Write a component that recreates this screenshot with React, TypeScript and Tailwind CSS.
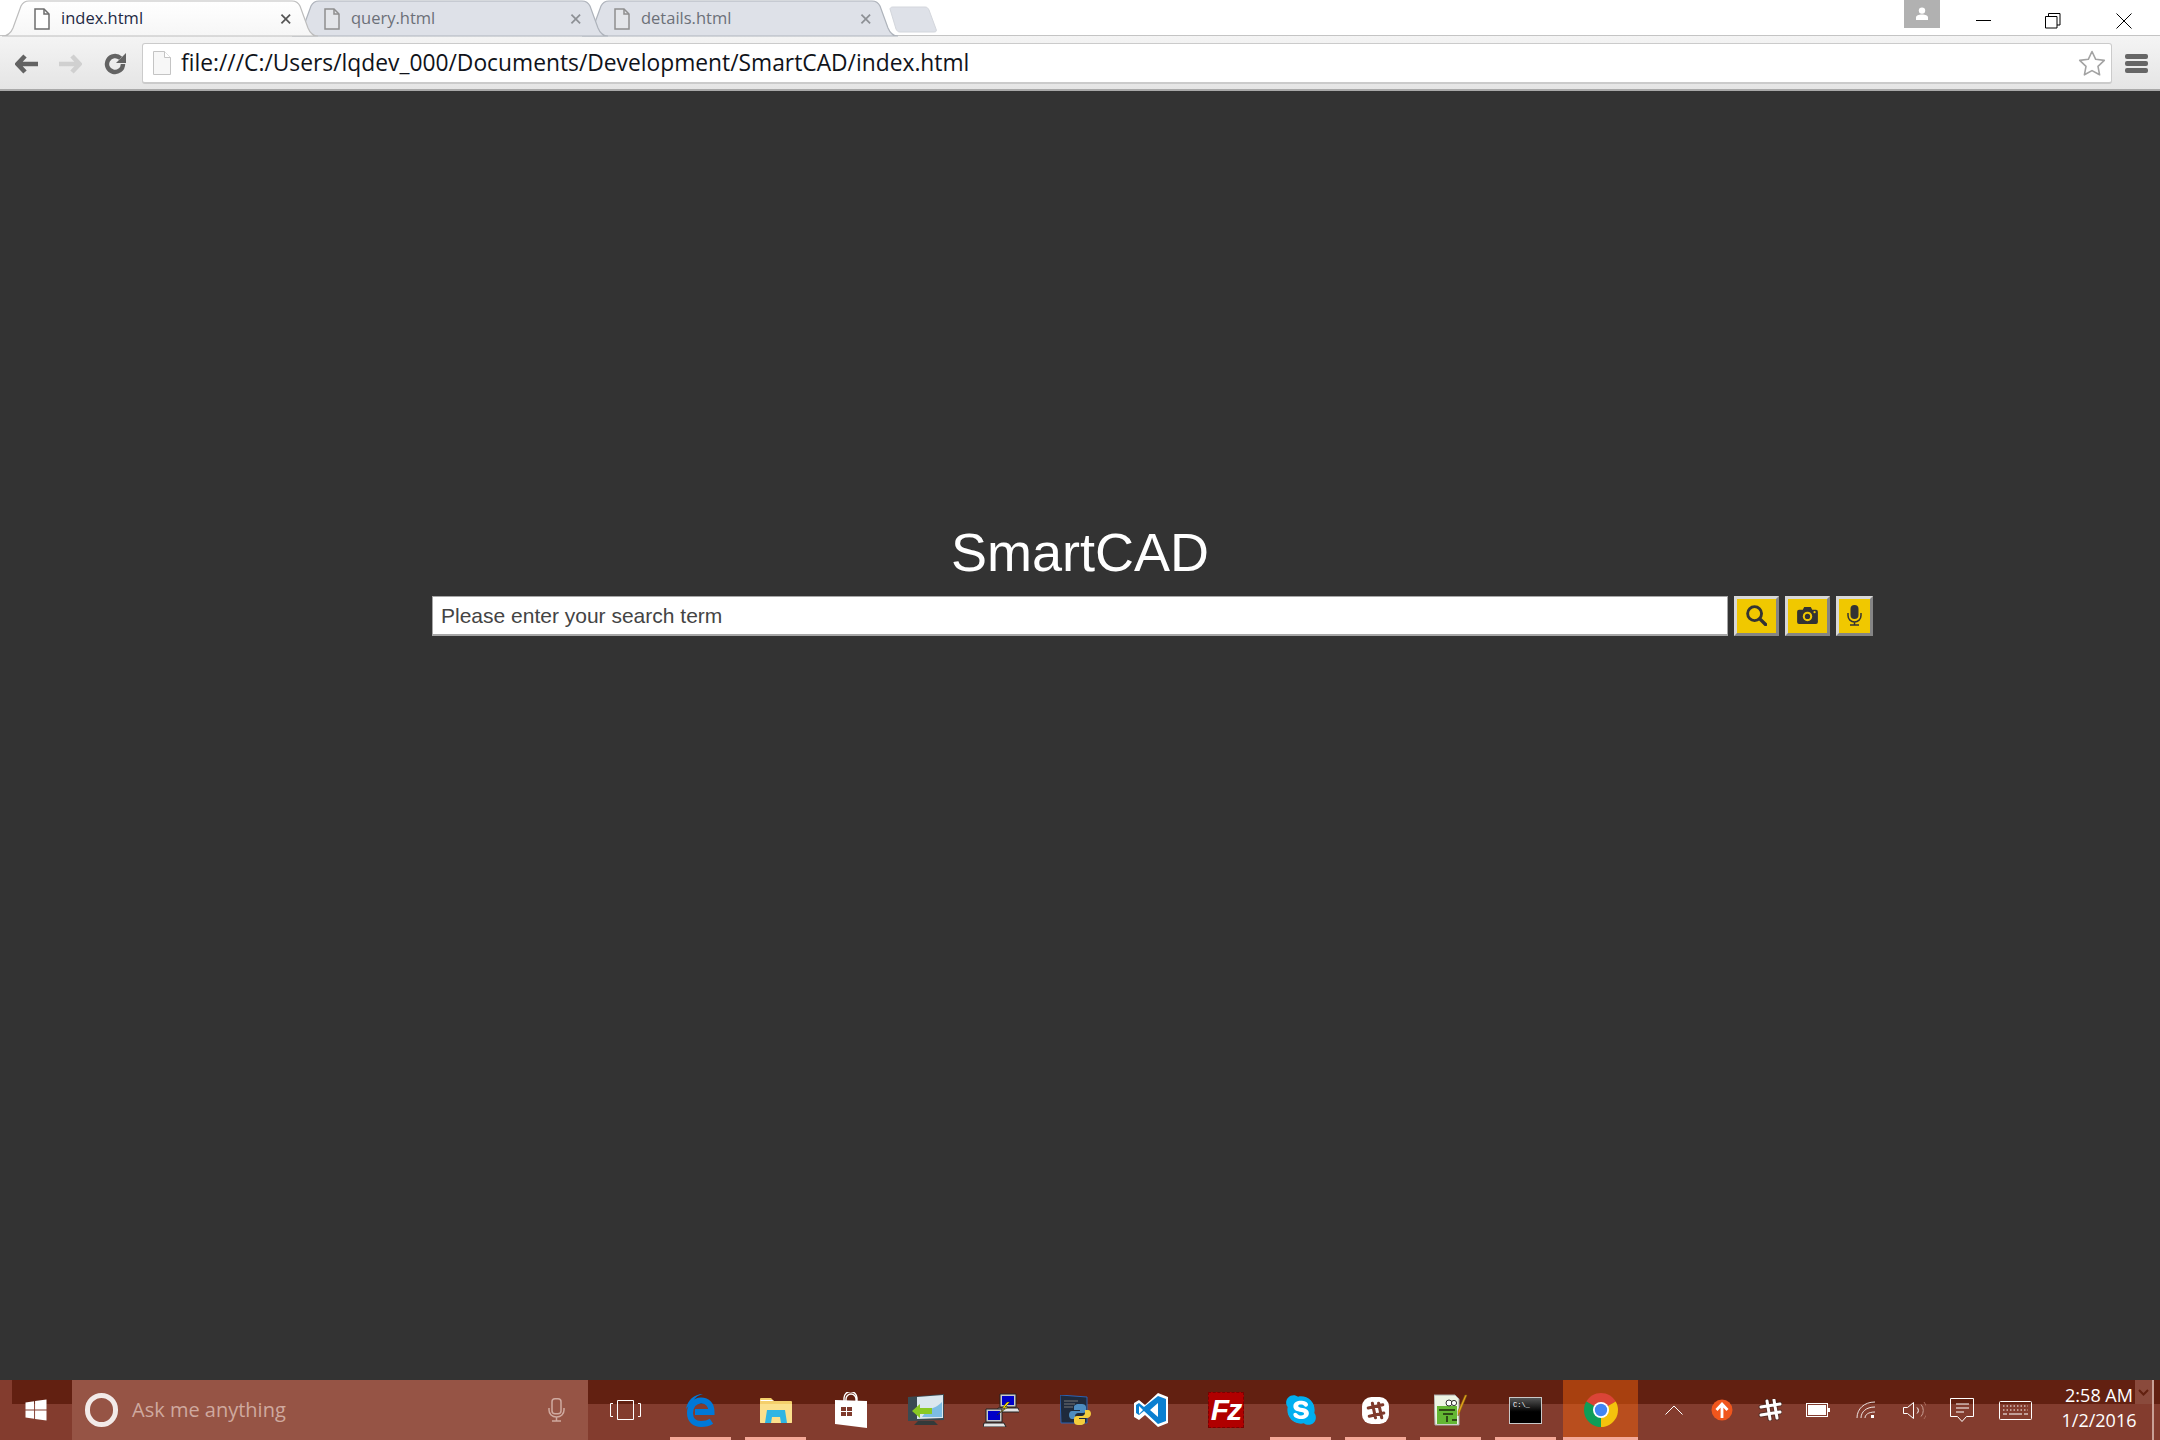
import React from "react";
import { FaSkype, FaWindows } from "react-icons/fa";

const uiFont = "font-['Open_Sans',sans-serif]";

const PageIcon = ({ muted = false }: { muted?: boolean }) => (
  <svg width="16" height="22" viewBox="0 0 16 22" className="shrink-0">
    <path
      d="M1 1h9l5 5v15H1z"
      fill={muted ? "#e4e6ea" : "#fff"}
      stroke={muted ? "#8f8f8f" : "#6d6d6d"}
      strokeWidth="1.5"
    />
    <path d="M10 1v5h5" fill="none" stroke={muted ? "#8f8f8f" : "#6d6d6d"} strokeWidth="1.5" />
  </svg>
);

const TabShape = ({ active }: { active: boolean }) => (
  <svg width="316" height="37" viewBox="0 0 316 37" className="absolute left-0 top-0">
    <defs>
      <linearGradient id="activeTab" x1="0" y1="0" x2="0" y2="1">
        <stop offset="0" stopColor="#ffffff" />
        <stop offset="1" stopColor="#f6f6f6" />
      </linearGradient>
    </defs>
    <path
      d="M0 36C6 36 9 33 11 28L19 6C21 2 23 1 27 1L290 1C294 1 296 2 298 6L306 28C308 33 311 36 316 36Z"
      fill={active ? "url(#activeTab)" : "#dee1e8"}
      stroke={active ? "#bdbdbd" : "#aeb3bb"}
      strokeWidth="1.2"
    />
  </svg>
);

const Tab = ({ title, active = false, z }: { title: string; active?: boolean; z: string }) => (
  <div className={`relative h-[37px] w-[290px] shrink-0 ${z}`}>
    <TabShape active={active} />
    <div className="relative flex h-[37px] items-center pl-[32px]">
      <PageIcon muted={!active} />
      <span className={`ml-[11px] w-[228px] text-[16.5px] ${active ? "text-[#1f2a44]" : "text-[#6c7078]"}`}>
        {title}
      </span>
      <svg width="12" height="12" viewBox="0 0 12 12">
        <path
          d="M1.5 1.5l9 9M10.5 1.5l-9 9"
          stroke={active ? "#555" : "#8d9095"}
          strokeWidth="1.8"
          fill="none"
        />
      </svg>
    </div>
  </div>
);

const TabStrip = () => (
  <div className={`relative flex h-[36px] bg-white pl-[2px] ${uiFont}`}>
    <div className="absolute bottom-0 left-0 h-px w-full bg-[#c4c4c4]" />
    <Tab title="index.html" active z="z-30" />
    <Tab title="query.html" z="z-20" />
    <Tab title="details.html" z="z-10" />
    <svg width="50" height="28" viewBox="0 0 50 28" className="relative z-0 ml-[17px] mt-[6px] shrink-0">
      <path
        d="M1 3C1 2 2 1 4 1H36C38 1 39 2 40 4L47 23C48 25 47 26 45 26H11C9 26 8 25 7 23Z"
        fill="#dee1e8"
        stroke="#d3d6dc"
      />
    </svg>
    <div className="relative z-0 ml-auto flex h-[36px] items-start">
      <div className="flex h-[28px] w-[36px] items-center justify-center bg-[#b1b1b1]">
        <svg width="14" height="14" viewBox="0 0 14 14">
          <circle cx="7" cy="3.6" r="3.2" fill="#fff" />
          <path d="M1 13v-2.5C1 8.8 3.5 7.6 7 7.6s6 1.2 6 2.9V13z" fill="#fff" />
        </svg>
      </div>
      <div className="flex h-[28px] w-[86px] items-end justify-center pb-[7px]">
        <div className="h-px w-[15px] bg-black" />
      </div>
      <svg width="16" height="16" viewBox="0 0 16 16" className="ml-[19px] mt-[13px]">
        <path d="M.5 3.5h11.5v11.5H.5zM3.5 3.5V.5h11.5v11.5H12" fill="none" stroke="#000" />
      </svg>
      <svg width="16" height="16" viewBox="0 0 16 16" className="ml-[55px] mr-[28px] mt-[13px]">
        <path d="M.5.5l15 15M15.5.5l-15 15" fill="none" stroke="#000" />
      </svg>
    </div>
  </div>
);

const NavArrow = ({ dir, color }: { dir: "left" | "right"; color: string }) => (
  <svg width="24" height="20" viewBox="0 0 24 20" className={dir === "right" ? "-scale-x-100" : ""}>
    <path d="M10 2L2.5 10l7.5 8M3 10h20" fill="none" stroke={color} strokeWidth="4.6" />
  </svg>
);

const Toolbar = () => (
  <div className="flex h-[55px] items-center border-b-2 border-[#a9a9a9] bg-[linear-gradient(#f4f4f4,#e5e5e5)] pl-[15px] pt-[2px]">
    <NavArrow dir="left" color="#636363" />
    <div className="ml-[19px]">
      <NavArrow dir="right" color="#d0d0d0" />
    </div>
    <svg width="23" height="23" viewBox="0 0 23 23" className="ml-[22px]">
      <path d="M19 12a8 8 0 1 1-2.4-5.7" fill="none" stroke="#636363" strokeWidth="4.4" />
      <path d="M22 1v10H12z" fill="#636363" />
    </svg>
    <div className="ml-[15px] flex h-[41px] w-[1970px] items-center rounded-[3px] border border-b-2 border-[#cbcbcb] bg-white pl-[10px] pr-[5px]">
      <svg width="18" height="24" viewBox="0 0 18 24" className="shrink-0">
        <path d="M.5.5h11l6 6v17H.5z" fill="#f7f7f7" stroke="#c4c4c4" />
        <path d="M11.5.5v6h6" fill="#fff" stroke="#c4c4c4" />
      </svg>
      <span className={`ml-[10px] text-[22.8px] text-[#10131a] ${uiFont}`}>
        file:///C:/Users/lqdev_000/Documents/Development/SmartCAD/index.html
      </span>
      <svg width="28" height="27" viewBox="0 0 28 27" className="ml-auto">
        <path
          d="M14 1.5l3.7 7.8 8.6 1.1-6.3 5.9 1.6 8.5-7.6-4.2-7.6 4.2 1.6-8.5-6.3-5.9 8.6-1.1z"
          fill="#fff"
          stroke="#a3a3a3"
          strokeWidth="1.6"
          strokeLinejoin="round"
        />
      </svg>
    </div>
    <div className="ml-[13px] flex w-[23px] flex-col gap-[2px]">
      <div className="h-[5px] rounded-[2px] bg-[#666]" />
      <div className="h-[5px] rounded-[2px] bg-[#666]" />
      <div className="h-[5px] rounded-[2px] bg-[#666]" />
    </div>
  </div>
);

const SearchButton = ({ width, children }: { width: string; children: React.ReactNode }) => (
  <button
    className={`flex h-[40px] items-center justify-center border-[3px] border-b-[#858585] border-l-[#d8d8d8] border-r-[#858585] border-t-[#d8d8d8] bg-[#f0c800] pb-[2px] ${width}`}
  >
    {children}
  </button>
);

const Search = () => (
  <div className="flex items-start pl-[432px]">
    <input
      placeholder="Please enter your search term"
      className="h-[40px] w-[1296px] border border-b-2 border-[#a6a6a6] bg-white pl-[8px] font-['Liberation_Sans',sans-serif] text-[21px] text-[#444] outline-none placeholder:text-[#444]"
    />
    <div className="ml-[6px] flex gap-[6px]">
      <SearchButton width="w-[45px]">
        <svg width="21" height="21" viewBox="0 0 22 22">
          <circle cx="9" cy="9" r="7.3" fill="none" stroke="#333" strokeWidth="3" />
          <path d="M14.5 14.5l6 6" stroke="#333" strokeWidth="3.6" strokeLinecap="round" />
        </svg>
      </SearchButton>
      <SearchButton width="w-[45px]">
        <svg width="21" height="17" viewBox="0 0 22 18">
          <path
            d="M2 3h4l1.5-3h7L16 3h4a2 2 0 0 1 2 2v11a2 2 0 0 1-2 2H2a2 2 0 0 1-2-2V5a2 2 0 0 1 2-2z"
            fill="#333"
          />
          <circle cx="11" cy="10" r="5" fill="#f0c800" />
          <circle cx="11" cy="10" r="2.8" fill="#333" />
          <circle cx="18.5" cy="5.5" r="1.2" fill="#f0c800" />
        </svg>
      </SearchButton>
      <SearchButton width="w-[37px]">
        <svg width="15" height="21" viewBox="0 0 15 21">
          <rect x="3.5" y="0" width="8" height="14" rx="4" fill="#333" />
          <path d="M1 8v2.5a6.5 6.5 0 0 0 13 0V8M7.5 17v3M3 20h9" fill="none" stroke="#333" strokeWidth="1.5" />
        </svg>
      </SearchButton>
    </div>
  </div>
);

const Main = () => (
  <main className="flex-1 bg-[#333333] pt-[431px]">
    <h1 className="text-center font-['Liberation_Sans',sans-serif] text-[54px] font-normal leading-[60px] text-white">
      SmartCAD
    </h1>
    <div className="mt-[14px]">
      <Search />
    </div>
  </main>
);

const EdgeIcon = () => (
  <svg width="30" height="33" viewBox="0 0 30 33">
    <path
      d="M9 18h16.500c0-7-4-11.500-10.500-11.500C8.500 6.500 4 12 4 19c0 7.500 5 11 11 11 4 0 7.500-.8 10.500-2.800"
      fill="none"
      stroke="#0078d7"
      strokeWidth="6"
    />
    <path d="M0 15C1.500 6.500 8 0 17 0 11 1.500 8 4.500 6.500 9 4 10.500 2 12.500 0 15z" fill="#0078d7" />
  </svg>
);

const SkypeIcon = () => (
  <div className="relative flex h-[34px] w-[34px] items-center justify-center">
    <div className="absolute h-[26px] w-[26px] rounded-full bg-white" />
    <FaSkype size={34} className="relative text-[#00aff0]" />
  </div>
);

const FolderIcon = () => (
  <svg width="32" height="26" viewBox="0 0 32 26">
    <path d="M0 2a1 1 0 0 1 1-1h10l3 3h17a1 1 0 0 1 1 1v20a1 1 0 0 1-1 1H1a1 1 0 0 1-1-1z" fill="#f4cf6b" />
    <path d="M0 4h12l2-1H1z" fill="#fff" />
    <path d="M0 7h32v18a1 1 0 0 1-1 1H1a1 1 0 0 1-1-1z" fill="#fbe08c" />
    <path d="M5 26l2-13h18l2 13h-6l-1-6h-8l-1 6z" fill="#2fb5e3" />
  </svg>
);

const StoreIcon = () => (
  <svg width="32" height="36" viewBox="0 0 32 36">
    <path d="M9 9V6a6 6 0 0 1 13 0v4M11 9V7a5 5 0 0 1 10 0v3" fill="none" stroke="#fff" strokeWidth="1.4" />
    <path d="M0 8l32 1v27L0 32z" fill="#fff" />
    <path d="M6 15h5v4H6zM12 15h5v4h-5zM6 20h5v4H6zM12 20h5v4h-5z" fill="#7f3a2c" />
  </svg>
);

const ScreenArrowIcon = () => (
  <svg width="36" height="32" viewBox="0 0 36 32">
    <path d="M10 27h16l4 4H6z" fill="#333a3a" />
    <path d="M0 3l36-3v26l-36 1z" fill="#3a4a52" />
    <path d="M9 3l26-2v23l-26 1z" fill="#dbe7ee" />
    <path d="M20 15c5 0 10-3 14-7v15H14z" fill="#7cbce4" />
    <path d="M4 17l8-7v4h12v6H12v4z" fill="#8ac924" />
  </svg>
);

const Monitor = ({ x, y }: { x: number; y: number }) => (
  <g transform={`translate(${x} ${y})`}>
    <path d="M2 0h16v13H2z" fill="#c9c9c9" stroke="#222" />
    <path d="M4 2h12v9H4z" fill="#0000c8" />
    <path d="M0 14h20l2 4H-1z" fill="#e4e4e4" stroke="#222" />
  </g>
);

const PuttyIcon = () => (
  <svg width="36" height="34" viewBox="0 0 36 34">
    <Monitor x={15} y={1} />
    <Monitor x={1} y={16} />
    <path d="M24 9l-5 6 3 0-8 7 11-8-3 0 5-5z" fill="#ffe800" stroke="#222" strokeWidth=".6" />
  </svg>
);

const PythonIcon = () => (
  <svg width="32" height="31" viewBox="0 0 32 31">
    <path d="M0 0l27 2v26L1 28z" fill="#1f2a3c" stroke="#2a63b5" />
    <path d="M4 6h14M4 9h11M4 12h9" stroke="#777" />
    <path d="M19 9c-4 0-5 2-5 3v3h6v1h-8c-2 0-3 2-3 4s1 4 3 4h3v-3c0-2 2-3 3-3h5c2 0 3-1 3-3v-3c0-2-2-3-4-3z" fill="#4d8cc0" />
    <path d="M20 30c4 0 5-2 5-3v-3h-6v-1h8c2 0 4-2 4-4s-1-4-3-4h-3v3c0 2-2 3-3 3h-5c-2 0-3 1-3 3v3c0 2 2 3 4 3z" fill="#f4cd3d" />
  </svg>
);

const VsCodeIcon = () => (
  <svg width="34" height="34" viewBox="0 0 34 34">
    <path d="M24 0l10 4v26l-10 4-13-12-6 5-5-3V10l5-3 6 5z" fill="#fff" />
    <path d="M24 3l8 3v22l-8 3-14-13-5 4-3-2V12l3-2 5 4zM24 10l-8 7 8 7zM5 13v8l4-4z" fill="#0a7fd0" fillRule="evenodd" />
  </svg>
);

const FileZillaIcon = () => (
  <div className="flex h-[36px] w-[36px] items-center justify-center border border-dashed border-[#7c0000] bg-[#b00000]">
    <span className="font-['Liberation_Sans',sans-serif] text-[30px] font-bold italic leading-none tracking-[-2px] text-white">
      Fz
    </span>
  </div>
);

const SlackIcon = ({ size }: { size: number }) => (
  <svg width={size} height={size} viewBox="0 0 28 28">
    <rect x="1" y="1" width="26" height="26" rx="9" fill="#fff" />
    <path d="M11 7l3 14M17 7l3 14M7 11.5l14-3M8 19.5l14-3" stroke="#7f3a2c" strokeWidth="3" strokeLinecap="round" />
  </svg>
);

const NotepadIcon = () => (
  <svg width="34" height="32" viewBox="0 0 34 32">
    <path d="M0 1h21l4 4v26H1z" fill="#eef4e4" stroke="#aaa" />
    <path d="M3 12h20v18H3z" fill="#63b733" />
    <circle cx="15" cy="9" r="3" fill="#fff" stroke="#333" />
    <circle cx="20" cy="9" r="2.6" fill="#fff" stroke="#333" />
    <path d="M5 16h16M9 20h10M13 22v6M18 26h5" stroke="#2f4a16" strokeWidth="2" />
    <path d="M33 1l-7 17-2 4 0-5 7-16z" fill="#e3a21a" stroke="#7a5a10" strokeWidth=".5" />
  </svg>
);

const CmdIcon = () => (
  <div className="h-[27px] w-[33px] border border-[#c9c9c9] bg-[linear-gradient(#555_0,#000_55%)] pl-[3px] pt-[3px] font-['Liberation_Mono',monospace] text-[7px] leading-[8px] text-white">
    C:\_
  </div>
);

const ChromeIcon = () => (
  <svg width="34" height="34" viewBox="0 0 34 34">
    <path d="M17 17L2.3 8.5A17 17 0 0 1 31.7 8.5z" fill="#db4437" />
    <path d="M17 17L31.7 8.5A17 17 0 0 1 17 34z" fill="#f4c20d" />
    <path d="M17 17L17 34A17 17 0 0 1 2.3 8.5z" fill="#0f9d58" />
    <circle cx="17" cy="17" r="8" fill="#fff" />
    <circle cx="17" cy="17" r="6.2" fill="#4285f4" />
  </svg>
);

const AppSlot = ({ children, active = false }: { children: React.ReactNode; active?: boolean }) => (
  <div
    className={`flex h-[60px] w-[75px] items-center justify-center ${
      active ? "border-b-[3px] border-[#f5a999] bg-[linear-gradient(#a8400f_24px,#b94e1e_24px)] pt-[3px]" : ""
    }`}
  >
    {children}
  </div>
);

const OpenBar = ({ children }: { children: React.ReactNode }) => (
  <div className="flex h-[60px] w-[75px] flex-col items-center">
    <div className="flex h-[57px] items-center pt-[3px]">{children}</div>
    <div className="h-[3px] w-[61px] bg-[#f5a999]" />
  </div>
);

const TrayIcon = ({ children, width = "w-[48px]" }: { children: React.ReactNode; width?: string }) => (
  <div className={`flex h-[60px] items-center justify-center ${width}`}>{children}</div>
);

const Tray = () => (
  <div className="ml-[12px] flex">
    <TrayIcon>
      <svg width="18" height="10" viewBox="0 0 18 10">
        <path d="M.5 9.5L9 1l8.5 8.5" fill="none" stroke="#fff" />
      </svg>
    </TrayIcon>
    <TrayIcon>
      <svg width="22" height="22" viewBox="0 0 22 22">
        <circle cx="11" cy="11" r="10.5" fill="#f0561d" />
        <path d="M11 19V7M5.5 11L11 5l5.5 6" fill="none" stroke="#fff" strokeWidth="2.8" />
      </svg>
    </TrayIcon>
    <TrayIcon>
      <svg width="24" height="22" viewBox="0 0 24 22">
        <path
          d="M9 2l3 18M16 1l3 18M3 8l19-3M3 16l19-3"
          stroke="#222"
          strokeWidth="5"
          strokeLinecap="round"
          opacity=".45"
        />
        <path d="M9 2l3 18M16 1l3 18M3 8l19-3M3 16l19-3" stroke="#fff" strokeWidth="3" strokeLinecap="round" />
      </svg>
    </TrayIcon>
    <TrayIcon>
      <svg width="24" height="14" viewBox="0 0 24 14">
        <rect x=".5" y=".5" width="21" height="13" fill="none" stroke="#fff" />
        <rect x="2" y="2" width="18" height="10" fill="#fff" />
        <rect x="22" y="5" width="2" height="4" fill="#fff" />
      </svg>
    </TrayIcon>
    <TrayIcon>
      <svg width="20" height="18" viewBox="0 0 20 18">
        <path d="M1 17C1 8 8 1 19 1M5 17c0-6 5-11 14-11M9 17c0-3 3-6 10-6" fill="none" stroke="#fff" opacity=".85" />
        <rect x="15" y="14" width="3" height="3" fill="#fff" />
      </svg>
    </TrayIcon>
    <TrayIcon>
      <svg width="23" height="19" viewBox="0 0 23 19">
        <path d="M.5 6.5h4l6-5v16l-6-5h-4z" fill="none" stroke="#fff" />
        <path d="M14 6.500a4 4 0 0 1 0 6" fill="none" stroke="#fff" />
        <path d="M18 3.500a9 9 0 0 1 0 12" fill="none" stroke="#c9a095" />
        <path d="M21 1a13 13 0 0 1 0 17" fill="none" stroke="#a8695a" />
      </svg>
    </TrayIcon>
    <TrayIcon>
      <svg width="24" height="24" viewBox="0 0 24 24">
        <path d="M.5.5h23v18h-7l-4.500 5-4.500-5h-7z" fill="none" stroke="#fff" />
        <path d="M6 6h13M6 10h13M6 14h8" stroke="#fff" />
      </svg>
    </TrayIcon>
    <TrayIcon width="w-[58px]">
      <svg width="33" height="19" viewBox="0 0 33 19">
        <rect x=".5" y=".5" width="32" height="18" rx="1" fill="none" stroke="#fff" />
        <path d="M4 5h25M4 9h25" stroke="#fff" strokeDasharray="1.500 2" />
        <path d="M4 13h4M10 13h13M25 13h4" stroke="#fff" />
      </svg>
    </TrayIcon>
    <div className={`ml-[5px] flex h-[60px] w-[100px] flex-col items-center pt-[3px] text-[18px] leading-[25px] text-white ${uiFont}`}>
      <span>2:58 AM</span>
      <span>1/2/2016</span>
    </div>
  </div>
);

const Taskbar = () => (
  <footer className="relative flex h-[60px] bg-[linear-gradient(#622011_24px,#833c2e_24px)]">
    <div className="flex w-[72px] items-center justify-center bg-[linear-gradient(to_right,#833c2e_12px,transparent_12px)]">
      <FaWindows size={24} className="text-white" />
    </div>
    <div className="flex w-[516px] items-center bg-[#965445] pl-[13px]">
      <div className="h-[34px] w-[33px] rounded-full border-[5px] border-[#f2eae8]" />
      <span className={`ml-[14px] text-[20px] text-[#cfa99f] ${uiFont}`}>Ask me anything</span>
      <svg width="17" height="24" viewBox="0 0 17 24" className="ml-[262px]">
        <rect x="4" y=".75" width="9" height="15" rx="3" fill="none" stroke="#cfa99f" strokeWidth="1.500" />
        <path d="M1 10v2c0 4 3 7 7.500 7s7.500-3 7.500-7v-2M8.500 19v4M4 23h9" fill="none" stroke="#cfa99f" strokeWidth="1.500" />
      </svg>
    </div>
    <AppSlot>
      <svg width="31" height="20" viewBox="0 0 31 20">
        <path d="M7.500.5h16v19h-16z" fill="none" stroke="#fff" />
        <path d="M3 3.500H.5v13H3M28 3.500h2.500v13H28" fill="none" stroke="#fff" />
      </svg>
    </AppSlot>
    <OpenBar>
      <EdgeIcon />
    </OpenBar>
    <OpenBar>
      <FolderIcon />
    </OpenBar>
    <AppSlot>
      <StoreIcon />
    </AppSlot>
    <AppSlot>
      <ScreenArrowIcon />
    </AppSlot>
    <AppSlot>
      <PuttyIcon />
    </AppSlot>
    <AppSlot>
      <PythonIcon />
    </AppSlot>
    <AppSlot>
      <VsCodeIcon />
    </AppSlot>
    <AppSlot>
      <FileZillaIcon />
    </AppSlot>
    <OpenBar>
      <SkypeIcon />
    </OpenBar>
    <OpenBar>
      <SlackIcon size={29} />
    </OpenBar>
    <OpenBar>
      <NotepadIcon />
    </OpenBar>
    <OpenBar>
      <CmdIcon />
    </OpenBar>
    <AppSlot active>
      <ChromeIcon />
    </AppSlot>
    <Tray />
    <div className="absolute right-[6px] top-0 flex h-full">
      <div className="flex h-[24px] w-[17px] items-center justify-center bg-[#8a4a3c]">
        <svg width="11" height="7" viewBox="0 0 11 7">
          <path d="M1 1l4.500 4.500L10 1" fill="none" stroke="#62200f" strokeWidth="2" />
        </svg>
      </div>
      <div className="h-full w-[2px] bg-[#c9a095]" />
    </div>
  </footer>
);

export default function App() {
  return (
    <div className="flex h-[1440px] w-[2160px] flex-col overflow-hidden">
      <TabStrip />
      <Toolbar />
      <Main />
      <Taskbar />
    </div>
  );
}
